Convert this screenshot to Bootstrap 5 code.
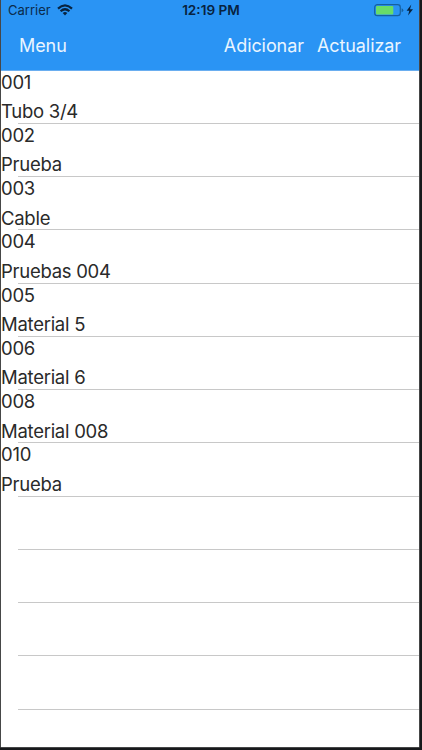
<!DOCTYPE html>
<html lang="es">
<head>
<meta charset="utf-8">
<meta name="viewport" content="width=device-width, initial-scale=1">
<title>Materiales</title>
<link href="https://cdn.jsdelivr.net/npm/bootstrap@5.3.0/dist/css/bootstrap.min.css" rel="stylesheet">
<style>
html,body{height:100%}
body{background:#17191b;font-family:Inter,"Liberation Sans",sans-serif;color:#2a2a2a;overflow:hidden}
.phone{height:747px;margin-left:1px;width:418px;box-shadow:0 0 0 .5px #777}
.top-area{background:#2a94f4;height:70.6px;border-bottom:1px solid #6aaef0;flex:none}
.status{height:20px;display:grid;grid-template-columns:1fr auto 1fr;padding:0 5px 0 7px;color:#0b2b4b;font-size:13px;line-height:20px}
.wifi{margin-left:6px}
.clock{font-weight:600;font-size:13.6px;color:#08233f}
.actions{height:50px;padding:0 18px;font-size:18px;line-height:52px;letter-spacing:-.08px}
.actions a{color:#e9f5ff}
.adicionar{margin-right:13px}
.entry{height:53.25px;flex:none;font-size:18.5px;line-height:23px;letter-spacing:-.27px}
.entry::after{content:"";height:1px;flex:none;background:#c8c8c8;margin:auto 0 0 17px}
.desc{margin-top:6.5px;height:22px}
</style>
<script src="https://cdn.jsdelivr.net/npm/bootstrap@5.3.0/dist/js/bootstrap.bundle.min.js"></script>
</head>
<body>
<main class="phone bg-white d-flex flex-column overflow-hidden">
<header class="top-area">
<div class="status">
<div class="d-flex align-items-center"><span>Carrier</span>
<svg class="wifi" width="16" height="12" viewBox="0 0 16 12" fill="none" stroke="#08233f" stroke-width="2.2"><path d="M1 4.6Q8-1.8 15 4.6M3.6 7.3Q8 3.2 12.4 7.3"/><path d="M5.7 9Q8 7 10.3 9L8 11.5z" fill="#08233f" stroke="none"/></svg></div>
<span class="clock">12:19 PM</span>
<div class="d-flex align-items-center justify-content-end">
<svg width="40" height="14" viewBox="0 0 40 14"><rect x=".7" y="1.7" width="25.6" height="11" rx="2.7" fill="none" stroke="#16609f" stroke-width="1.2"/><rect x="2" y="3" width="17.3" height="8.4" rx="1" fill="#68dc68"/><path d="M27.6 5.2q1.7.3 1.7 2t-1.7 2z" fill="#16609f"/><path d="M37.3 1.6L32.6 7.8H35.3L34 12.6L39 6.3H36z" fill="#08233f"/></svg></div>
</div>
<nav class="actions d-flex justify-content-between">
<a class="text-decoration-none">Menu</a>
<div class="d-flex"><a class="adicionar text-decoration-none">Adicionar</a><a class="text-decoration-none">Actualizar</a></div>
</nav>
</header>
<section class="d-flex flex-column">
<div class="entry d-flex flex-column"><div>001</div><div class="desc">Tubo 3/4</div></div>
<div class="entry d-flex flex-column"><div>002</div><div class="desc">Prueba</div></div>
<div class="entry d-flex flex-column"><div>003</div><div class="desc">Cable</div></div>
<div class="entry d-flex flex-column"><div>004</div><div class="desc">Pruebas 004</div></div>
<div class="entry d-flex flex-column"><div>005</div><div class="desc">Material 5</div></div>
<div class="entry d-flex flex-column"><div>006</div><div class="desc">Material 6</div></div>
<div class="entry d-flex flex-column"><div>008</div><div class="desc">Material 008</div></div>
<div class="entry d-flex flex-column"><div>010</div><div class="desc">Prueba</div></div>
<div class="entry d-flex flex-column"></div>
<div class="entry d-flex flex-column"></div>
<div class="entry d-flex flex-column"></div>
<div class="entry d-flex flex-column"></div>
</section>
</main>
</body>
</html>
